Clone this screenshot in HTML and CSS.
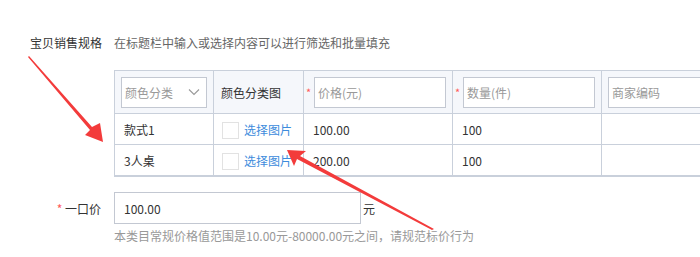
FILE: index.html
```html
<!DOCTYPE html>
<html lang="zh-CN">
<head>
  <meta charset="UTF-8" />
  <title>宝贝销售规格</title>
  <link rel="stylesheet" href="styles.css">
</head>
<body>
  <div class="page">
    <div class="field spec-head">
      <div class="field-label">宝贝销售规格</div>
      <div class="field-tip">在标题栏中输入或选择内容可以进行筛选和批量填充</div>
    </div>

    <table class="sku-table">
      <colgroup>
        <col class="c-color">
        <col class="c-pic">
        <col class="c-wide">
        <col class="c-wide">
        <col class="c-wide">
      </colgroup>
      <thead>
        <tr>
          <th>
            <div class="select">
              <span>颜色分类</span>
              <svg width="12" height="8" viewBox="0 0 12 8"><path d="M1 1.5 L6 6.5 L11 1.5" fill="none" stroke="#999" stroke-width="1.1"/></svg>
            </div>
          </th>
          <th class="plain">颜色分类图</th>
          <th><div class="req"><i>*</i><div class="input">价格(元)</div></div></th>
          <th><div class="req"><i>*</i><div class="input">数量(件)</div></div></th>
          <th><div class="req"><div class="input">商家编码</div></div></th>
        </tr>
      </thead>
      <tbody>
        <tr>
          <td>款式1</td>
          <td><span class="pic"></span><a class="link">选择图片</a></td>
          <td>100.00</td>
          <td>100</td>
          <td></td>
        </tr>
        <tr>
          <td>3人桌</td>
          <td><span class="pic"></span><a class="link">选择图片</a></td>
          <td>200.00</td>
          <td>100</td>
          <td></td>
        </tr>
      </tbody>
    </table>

    <div class="field price-row">
      <div class="field-label right"><i>*</i> 一口价</div>
      <div class="price-input">100.00</div>
      <span class="unit">元</span>
    </div>
    <div class="price-tip">本类目常规价格值范围是10.00元-80000.00元之间，请规范标价行为</div>

    <!-- annotation arrows -->
    <svg class="arrows" width="700" height="257" viewBox="0 0 700 257">
      <polygon points="28,57 29,56 92,127 100,123 103,142 85,135 90,130" fill="#f33b3b"/>
      <polygon points="287,150 306,151 300,156 434,229 432,230 297,159 294,166" fill="#f33b3b"/>
    </svg>
  </div>
</body>
</html>
```

FILE: styles.css
```css
body {
  margin: 0;
  background: #fff;
  font-family: "Microsoft YaHei", "Noto Sans CJK SC", "Noto Sans", sans-serif;
  font-size: 12px;
  color: #333;
  overflow: hidden;
}

.page {
  position: relative;
  width: 700px;
  height: 257px;
  overflow: hidden;
}

.field {
  display: flex;
  align-items: center;
  padding-left: 30px;
}

.field-label {
  width: 84px;
  flex-shrink: 0;
  color: #333;
}

.field-label.right {
  text-align: right;
  padding-right: 13px;
  width: 71px;
}

.field-label i,
.req i {
  font-style: normal;
  color: #ff5a5a;
}

.spec-head {
  padding-top: 33px;
  height: 18px;
}

.field-tip {
  color: #666;
}

.sku-table {
  margin-top: 19px;
  margin-left: 114px;
  border-collapse: collapse;
  table-layout: fixed;
  width: 636px;
  border-bottom: 2px solid #c9d0db;
}

.c-color { width: 99px; }
.c-pic { width: 90px; }
.c-wide { width: 149px; }

.sku-table th,
.sku-table td {
  border: 1px solid #c9d0db;
  text-align: left;
  font-weight: normal;
  white-space: nowrap;
  overflow: hidden;
}

.sku-table th {
  background: #f5f7fb;
  height: 42px;
  padding: 0 6px;
}

.sku-table th.plain {
  padding-left: 7px;
  color: #333;
}

.sku-table td {
  height: 30px;
  padding: 0 9px;
}

.select,
.input {
  box-sizing: border-box;
  height: 31px;
  border: 1px solid #c3c8d2;
  background: #fff;
  color: #999;
  display: flex;
  align-items: center;
  padding-left: 3px;
}

.select {
  justify-content: space-between;
  padding-right: 6px;
}

.req {
  display: flex;
  align-items: center;
}

.req i {
  width: 8px;
  margin-left: -4px;
  font-size: 11px;
}

.req .input {
  flex: 1;
}

.pic {
  display: inline-block;
  width: 15px;
  height: 15px;
  border: 1px solid #e2e2e2;
  vertical-align: middle;
  margin-right: 5px;
  margin-left: -1px;
}

.link {
  color: #3d8bdc;
  vertical-align: middle;
}

.price-row {
  margin-top: 15px;
}

.price-input {
  box-sizing: border-box;
  width: 247px;
  height: 32px;
  border: 1px solid #c3c8d2;
  padding-left: 9px;
  display: flex;
  align-items: center;
  color: #333;
}

.unit {
  margin-left: 2px;
  color: #333;
}

.price-tip {
  margin-left: 114px;
  margin-top: 3px;
  color: #999;
}

.arrows {
  position: absolute;
  left: 0;
  top: 0;
  pointer-events: none;
}
```
